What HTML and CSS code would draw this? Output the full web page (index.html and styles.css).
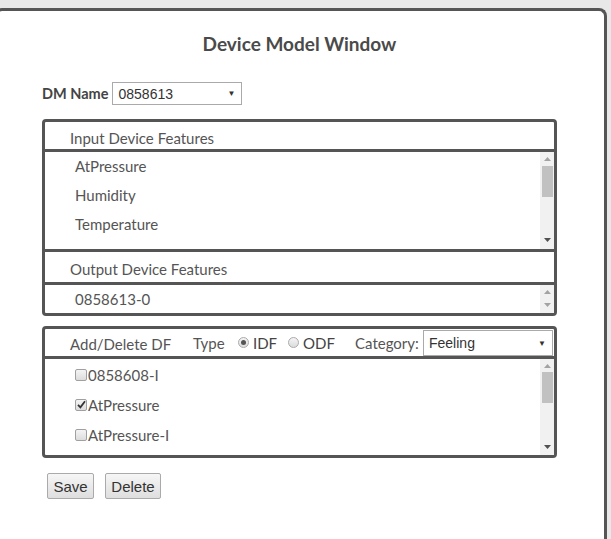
FILE: index.html
```html
<!DOCTYPE html>
<html lang="en">
<head>
<meta charset="utf-8">
<title>Device Model Window</title>
<link rel="stylesheet" href="styles.css">
</head>
<body>
<div class="window">
  <h1 class="title">Device Model Window</h1>
  <div class="dm-row">
    <span class="dm-label">DM Name</span>
    <div class="select dm-select"><span class="select-text">0858613</span><span class="caret">&#9660;</span></div>
  </div>

  <div class="panel">
    <div class="panel-head">Input Device Features</div>
    <div class="list list-idf">
      <ul class="items">
        <li>AtPressure</li>
        <li>Humidity</li>
        <li>Temperature</li>
      </ul>
      <div class="scrollbar">
        <svg class="arrow" width="7" height="4" viewBox="0 0 7 4"><polygon points="0,4 7,4 3.5,0" fill="#a3a3a3"/></svg>
        <div class="thumb thumb-idf"></div>
        <svg class="arrow arrow-down" width="7" height="4" viewBox="0 0 7 4"><polygon points="0,0 7,0 3.5,4" fill="#505050"/></svg>
      </div>
    </div>
    <div class="panel-head head-odf">Output Device Features</div>
    <div class="list list-odf">
      <ul class="items">
        <li>0858613-0</li>
      </ul>
      <div class="scrollbar">
        <svg class="arrow" width="7" height="4" viewBox="0 0 7 4"><polygon points="0,4 7,4 3.5,0" fill="#a3a3a3"/></svg>
        <svg class="arrow arrow-down" width="7" height="4" viewBox="0 0 7 4"><polygon points="0,0 7,0 3.5,4" fill="#a3a3a3"/></svg>
      </div>
    </div>
  </div>

  <div class="panel panel-df">
    <div class="df-head">
      <span class="df-title">Add/Delete DF</span>
      <span class="df-type">Type</span>
      <span class="radio checked"></span><span class="radio-label idf">IDF</span>
      <span class="radio"></span><span class="radio-label odf">ODF</span>
      <span class="df-cat">Category:</span>
      <div class="select cat-select"><span class="select-text">Feeling</span><span class="caret">&#9660;</span></div>
    </div>
    <div class="list list-df">
      <ul class="checks">
        <li><span class="checkbox"></span>0858608-I</li>
        <li><span class="checkbox checked"><svg width="9" height="9" viewBox="0 0 9 9"><path d="M1 4.8 L3.4 7.3 L8 1.2" fill="none" stroke="#333" stroke-width="1.8"/></svg></span>AtPressure</li>
        <li><span class="checkbox"></span>AtPressure-I</li>
      </ul>
      <div class="scrollbar">
        <svg class="arrow" width="7" height="4" viewBox="0 0 7 4"><polygon points="0,4 7,4 3.5,0" fill="#a3a3a3"/></svg>
        <div class="thumb thumb-df"></div>
        <svg class="arrow arrow-down" width="7" height="4" viewBox="0 0 7 4"><polygon points="0,0 7,0 3.5,4" fill="#505050"/></svg>
      </div>
    </div>
  </div>

  <div class="actions">
    <button class="btn btn-save" type="button">Save</button>
    <button class="btn btn-delete" type="button">Delete</button>
  </div>
</div>
</body>
</html>
```

FILE: styles.css
```css
html, body {
  margin: 0;
  padding: 0;
  overflow: hidden;
}

body {
  background: #e8e8e8;
  font-family: "Lato", "Noto Sans", sans-serif;
  color: #555;
}

.window {
  box-sizing: border-box;
  margin: 8px 0 0 -6px;
  width: 613px;
  height: calc(100vh - 8px);
  border: 3px solid #555;
  border-bottom: none;
  border-radius: 8px 8px 0 0;
  background: #fff;
  padding: 20px 47px 0 45px;
}

.title {
  margin: 0;
  font-size: 19px;
  line-height: 26px;
  font-weight: 700;
  text-align: center;
  color: #4a4a4a;
}

.dm-row {
  display: flex;
  align-items: center;
  gap: 4px;
  margin-top: 25px;
}

.dm-label {
  font-size: 14.5px;
  font-weight: 700;
  color: #444;
}

.select {
  box-sizing: border-box;
  display: flex;
  align-items: center;
  justify-content: space-between;
  border: 1px solid #aaa;
  background: #fff;
  font-family: "Liberation Sans", Arial, sans-serif;
  font-size: 14px;
  color: #333;
  padding: 0 6px 0 5px;
}

.caret {
  font-size: 8px;
  color: #333;
}

.dm-select {
  width: 130px;
  height: 23px;
}

.panel {
  box-sizing: border-box;
  width: 515px;
  margin-top: 14px;
  border: 3px solid #555;
  border-radius: 4px;
}

.panel-df {
  margin-top: 10px;
}

.panel-head {
  height: 25px;
  padding-top: 2px;
  line-height: 28px;
  padding-left: 25px;
  font-size: 15px;
  border-bottom: 3px solid #555;
}

.head-odf {
  height: 30px;
  padding-top: 0;
  line-height: 34px;
}

.list {
  display: flex;
}

.list-idf {
  height: 97px;
  border-bottom: 3px solid #555;
}

.list-odf {
  height: 28px;
}

.list-df {
  height: 96px;
}

.items,
.checks {
  list-style: none;
  margin: 0;
  padding: 0 0 0 30px;
  flex: 1;
  overflow: hidden;
  font-size: 15px;
}

.items li {
  height: 29px;
  line-height: 29px;
}

.list-odf .items li {
  line-height: 28px;
}

.checks {
  padding: 1px 0 0 30px;
}

.checks li {
  display: flex;
  align-items: center;
  height: 30px;
}

.checkbox {
  box-sizing: border-box;
  width: 12px;
  height: 12px;
  margin-right: 1px;
  border: 1px solid #a0a0a0;
  border-radius: 2px;
  background: linear-gradient(#f4f4f4, #dcdcdc);
  display: flex;
  align-items: center;
  justify-content: center;
}

.checkbox svg {
  margin-top: -1px;
}

.scrollbar {
  box-sizing: border-box;
  width: 14px;
  background: #f1f1f1;
  display: flex;
  flex-direction: column;
  align-items: center;
  padding: 5px 0 7px;
}

.list-odf .scrollbar,
.list-df .scrollbar {
  padding-bottom: 6px;
}

.arrow {
  display: block;
  flex: none;
}

.arrow-down {
  margin-top: auto;
}

.thumb {
  width: 11px;
  height: 31px;
  background: #c1c1c1;
  flex: none;
}

.thumb-idf {
  margin-top: 5px;
}

.thumb-df {
  margin-top: 4px;
}

.df-head {
  display: flex;
  align-items: center;
  height: 27px;
  padding-left: 25px;
  padding-right: 1px;
  font-size: 15px;
  border-bottom: 3px solid #555;
}

.df-head > * {
  flex: none;
}

.df-title {
  width: 123px;
  margin-top: 2px;
}

.df-type {
  width: 45px;
}

.radio {
  box-sizing: border-box;
  width: 11px;
  height: 11px;
  border-radius: 50%;
  border: 1px solid #aaa;
  background: linear-gradient(#f4f4f4, #dcdcdc);
  margin-right: 4px;
  position: relative;
}

.radio.checked::after {
  content: "";
  position: absolute;
  left: 2px;
  top: 2px;
  width: 5px;
  height: 5px;
  border-radius: 50%;
  background: #555;
}

.radio-label {
  color: #444;
}

.idf {
  width: 35px;
}

.odf {
  width: 52px;
}

.df-cat {
  width: 68px;
}

.cat-select {
  width: 130px;
  height: 26px;
  margin-top: 1px;
}

.actions {
  display: flex;
  gap: 11px;
  margin: 15px 0 0 5px;
}

.btn {
  box-sizing: border-box;
  height: 26px;
  padding: 0;
  font-family: "Liberation Sans", Arial, sans-serif;
  font-size: 15px;
  color: #333;
  border: 1px solid #aaa;
  border-radius: 2px;
  background: linear-gradient(#f6f6f6, #dedede);
}

.btn-save {
  width: 47px;
}

.btn-delete {
  width: 56px;
}
```
